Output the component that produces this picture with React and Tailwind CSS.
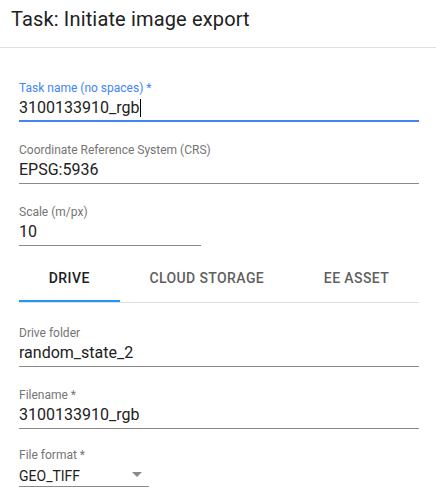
import React from "react";

function Field({ label, value, className = "", focused = false, caret = false }) {
  return (
    <div className={className}>
      <div
        className={
          "h-3 text-[12px] leading-3 whitespace-nowrap " +
          (focused ? "text-[#4285f4]" : "text-[#757575]")
        }
      >
        {label}
      </div>
      <div
        className={
          focused
            ? "mt-1 pb-[3px] border-b-2 border-[#4285f4]"
            : "mt-1 pb-1 border-b border-[#8a8a8a]"
        }
      >
        <div className="h-[19px] text-[16px] leading-[19px] text-[#212121] whitespace-nowrap flex items-center">
          <span>{value}</span>
          {caret && <span className="inline-block w-px h-[18px] bg-black ml-px" />}
        </div>
      </div>
    </div>
  );
}

export default function App() {
  return (
    <div className="w-[436px] h-[500px] bg-white overflow-hidden font-['Roboto',sans-serif]">
      <div className="h-[48px] pl-[11px] pt-[7px] border-b border-[#e0e0e0]">
        <div className="text-[20px] leading-[24px] tracking-[0.15px] text-[#212121]">Task: Initiate image export</div>
      </div>
      <div className="pl-[19px] pr-[17px]">
        <Field
          className="mt-[34px]"
          label="Task name (no spaces) *"
          value="3100133910_rgb"
          focused
          caret
        />
        <Field className="mt-[22px]" label="Coordinate Reference System (CRS)" value="EPSG:5936" />
        <Field className="mt-[22px] w-[182px]" label="Scale (m/px)" value="10" />

        <div className="mt-2 flex h-[49px] border-b border-[#e0e0e0]">
          <div className="relative flex-auto px-4 flex items-center justify-center text-[14px] font-medium tracking-[0.4px] text-[#212121]">
            DRIVE
            <div className="absolute left-0 right-0 bottom-0 h-[2px] bg-[#2196f3]" />
          </div>
          <div className="flex-auto px-4 flex items-center justify-center text-[14px] font-medium tracking-[0.4px] text-[#5f5f5f]">
            CLOUD STORAGE
          </div>
          <div className="flex-auto px-4 flex items-center justify-center text-[14px] font-medium tracking-[0.4px] text-[#5f5f5f]">
            EE ASSET
          </div>
        </div>

        <Field className="mt-6" label="Drive folder" value="random_state_2" />
        <Field className="mt-[22px]" label="Filename *" value="3100133910_rgb" />

        <div className="mt-5 w-[130px]">
          <div className="h-3 text-[12px] leading-3 text-[#757575] whitespace-nowrap">File format *</div>
          <div className="relative mt-[7px] pb-[2px] border-b border-[#8a8a8a]">
            <div className="h-4 text-[14px] leading-4 text-[#212121]">GEO_TIFF</div>
            <svg
              className="absolute right-0 top-[-6px]"
              width="24"
              height="24"
              viewBox="0 0 24 24"
            >
              <path d="M7 10l5 5 5-5z" fill="#8a8a8a" />
            </svg>
          </div>
        </div>
      </div>
    </div>
  );
}
